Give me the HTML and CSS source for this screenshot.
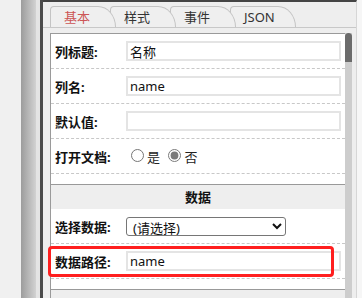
FILE: index.html
```html
<!DOCTYPE html>
<html>
<head>
    <title>列属性</title>
    <link rel="stylesheet" href="styles.css">
</head>
<body>
    <div class="frame">
        <div class="side"></div>
        <div class="panel">
            <div class="tabs">
                <div class="tab active">基本</div>
                <div class="tab">样式</div>
                <div class="tab">事件</div>
                <div class="tab">JSON</div>
            </div>
            <div class="box">
                <div class="content">
                    <div class="row">
                        <span class="lbl">列标题:</span>
                        <input class="inp" type="text" value="名称">
                    </div>
                    <div class="row">
                        <span class="lbl">列名:</span>
                        <input class="inp" type="text" value="name">
                    </div>
                    <div class="row">
                        <span class="lbl">默认值:</span>
                        <input class="inp" type="text" value="">
                    </div>
                    <div class="row">
                        <span class="lbl">打开文档:</span>
                        <span class="radios">
                            <label><input type="radio" name="doc">是</label>
                            <label><input type="radio" name="doc" checked>否</label>
                        </span>
                    </div>
                    <div class="gap"></div>

                    <div class="section">数据</div>
                    <div class="row">
                        <span class="lbl">选择数据:</span>
                        <select class="sel">
                            <option>(请选择)</option>
                        </select>
                    </div>
                    <div class="row">
                        <span class="lbl">数据路径:</span>
                        <input class="inp" type="text" value="name">
                        <div class="hl"></div>
                    </div>
                    <div class="gap"></div>
                    <div class="section"></div>
                </div>
                <div class="scrollbar"><div class="thumb"></div></div>
            </div>
        </div>
    </div>
</body>
</html>
```

FILE: styles.css
```css
body {
    margin: 0;
    background: #f6f6f6;
    font-family: "Noto Sans", "Noto Sans CJK SC", sans-serif;
    font-size: 13px;
    color: #222;
    overflow: hidden;
}
.frame {
    display: flex;
    height: 298px;
    overflow: hidden;
}
.side {
    width: 43px;
    flex: none;
    background: linear-gradient(to right, #f0f0f0 0, #f0f0f0 21px, #9c9c9c 21px, #d2d2d2 36px, #e4e4e4 36px, #e4e4e4 40px, #4b4b4b 40px);
}
.panel {
    width: 313px;
    flex: none;
    background: #eeeeee;
    border-top: 2px solid #444;
    border-right: 1px solid #d6d6d6;
    display: flex;
    flex-direction: column;
    overflow: hidden;
}
.tabs {
    display: flex;
    height: 21px;
    padding: 4px 0 0 7px;
    border-bottom: 1px solid #c8c8c8;
}
.tab {
    position: relative;
    width: 66px;
    height: 21px;
    box-sizing: border-box;
    margin-right: -6px;
    padding-left: 13px;
    line-height: 20px;
    border: 1px solid #c4c4c4;
    border-bottom: none;
    border-radius: 4px 18px 0 0 / 4px 21px 0 0;
    background: #efefef;
    color: #333;
}
.tab:nth-child(1) { z-index: 4; }
.tab:nth-child(2) { z-index: 3; }
.tab:nth-child(3) { z-index: 2; }
.tab:nth-child(4) { z-index: 1; }
.tab.active {
    color: #cc5555;
}
.box {
    flex: 1;
    display: flex;
    min-height: 0;
    margin: 5px 4px 0 7px;
}
.content {
    flex: 1;
    background: #fff;
    border-top: 1px solid #9a9a9a;
    border-left: 1px solid #9a9a9a;
}
.scrollbar {
    width: 7px;
    background: #cdcdcd;
}
.thumb {
    height: 29px;
    background: #6b6b6b;
    border-radius: 4px 4px 0 0;
}
.row {
    position: relative;
    display: flex;
    align-items: center;
    height: 34px;
    border-bottom: 1px dashed #c8c8c8;
}
.lbl {
    flex: none;
    width: 71px;
    padding-left: 4px;
    font-weight: bold;
    color: #111;
}
.inp {
    width: 215px;
    height: 20px;
    box-sizing: border-box;
    margin: 0;
    padding: 0 2px;
    border: 2px solid #e4e4e4;
    font: 13px "Noto Sans", "Noto Sans CJK SC", sans-serif;
    color: #111;
    outline: none;
}
.radios input {
    accent-color: #7a7a7a;
}
.sel {
    width: 160px;
    height: 19px;
    margin: 0;
    padding: 0 2px;
    border: 1px solid #767676;
    border-radius: 3px;
    background: #fff;
    font: 13px "Noto Sans", "Noto Sans CJK SC", sans-serif;
    color: #111;
}
.gap {
    height: 10px;
}
.section {
    height: 24px;
    line-height: 24px;
    border-top: 1px solid #999;
    background: #eeeeee;
    text-align: center;
    font-weight: bold;
    color: #111;
}
.hl {
    position: absolute;
    left: -3px;
    top: 2px;
    width: 286px;
    height: 31px;
    box-sizing: border-box;
    border: 3px solid #ff1f1f;
    border-radius: 4px;
    pointer-events: none;
}
```
